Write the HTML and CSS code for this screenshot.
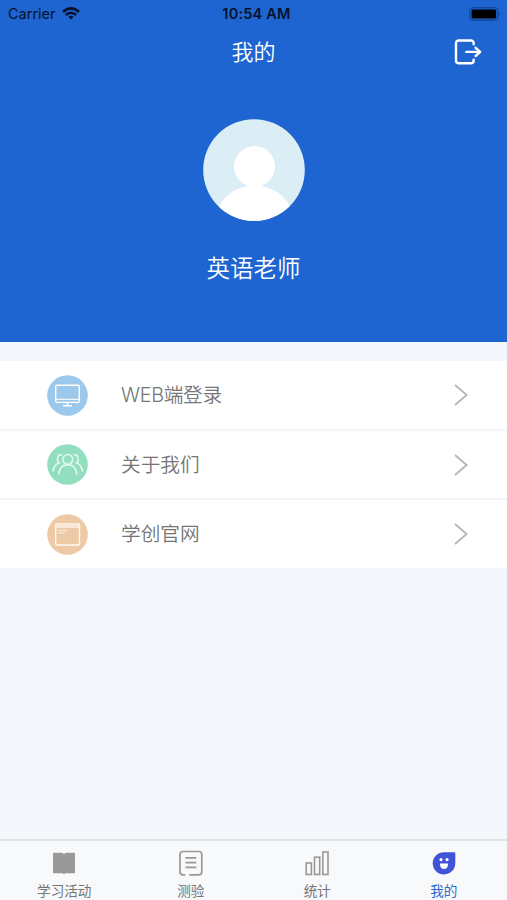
FILE: index.html
```html
<!DOCTYPE html>
<html lang="zh-CN">
<head>
    <meta charset="UTF-8">
    <meta name="viewport" content="width=device-width, initial-scale=1.0">
    <title>我的</title>
    <link rel="stylesheet" href="styles.css">
</head>
<body>
    <header class="profile">
        <div class="status-bar">
            <div class="carrier">
                <span>Carrier</span>
                <svg width="18" height="13" viewBox="0 0 18 13" fill="none" stroke="#06122b" stroke-width="2.5">
                    <path d="M1 5 Q9 -2.2 17 5"/>
                    <path d="M3.8 8 Q9 3.4 14.2 8"/>
                    <path d="M6.3 9.8 Q9 7.6 11.7 9.8 L9 12.5 Z" fill="#06122b" stroke="none"/>
                </svg>
            </div>
            <span class="time">10:54 AM</span>
            <svg class="battery" width="33" height="14" viewBox="0 0 33 14">
                <rect x="0.8" y="0.8" width="28" height="12.4" rx="3" fill="none" stroke="#0d3c86"/>
                <rect x="2.5" y="2.5" width="24.6" height="9" rx="1.5" fill="#000"/>
                <path d="M30.3 5 Q32 7 30.3 9 Z" fill="#0d3c86"/>
            </svg>
        </div>
        <div class="nav-bar">
            <h1 class="title">我的</h1>
            <svg class="logout" width="28" height="26" viewBox="0 0 28 26" fill="none" stroke="#fff" stroke-width="2.4" stroke-linecap="round" stroke-linejoin="round">
                <path d="M19.7 5.2 V4.6 Q19.7 1.5 16.6 1.5 H5 Q2 1.5 2 4.6 V21.2 Q2 24.3 5 24.3 H16.6 Q19.7 24.3 19.7 21.2 V20.6"/>
                <path d="M12.3 12.9 H26 M21.6 8.8 L26.2 12.9 L21.6 17"/>
            </svg>
        </div>
        <svg class="avatar" width="102" height="102" viewBox="0 0 102 102">
            <clipPath id="round"><circle cx="51" cy="51" r="50.8"/></clipPath>
            <g clip-path="url(#round)">
                <rect width="102" height="102" fill="#dbeef5"/>
                <ellipse cx="51.5" cy="102" rx="39" ry="35.5" fill="#fff"/>
                <circle cx="51.5" cy="47.5" r="20.5" fill="#fff"/>
            </g>
        </svg>
        <div class="name">英语老师</div>
    </header>

    <main class="menu">
        <div class="menu-item">
            <svg class="icon" width="41" height="41" viewBox="0 0 41 41" fill="none" stroke="#fff">
                <circle cx="20.5" cy="20.5" r="20.3" fill="#9bc8eb" stroke="none"/>
                <rect x="8.7" y="10.2" width="23.6" height="17.2" rx="1.3" stroke-width="1.4"/>
                <path d="M9 24.3 H32" stroke-width="1.1"/>
                <path d="M20.5 27.5 V30.5 M16 30.7 H25" stroke-width="1.4"/>
            </svg>
            <span class="label web">WEB端登录</span>
            <svg class="arrow" width="14" height="22" viewBox="0 0 14 22"><path d="M1 1 L12.7 11 L1 21"/></svg>
        </div>
        <div class="menu-item">
            <svg class="icon" width="41" height="41" viewBox="0 0 41 41" fill="none" stroke="#e5faf0" stroke-width="1.5" stroke-linecap="round">
                <circle cx="20.5" cy="20.5" r="20.3" fill="#92dfc0" stroke="none"/>
                <circle cx="20.8" cy="15.4" r="4.9"/>
                <path d="M11.8 30 Q12.8 20.7 20.8 20.7 Q28.8 20.7 29.8 30"/>
                <path d="M14.5 10.8 Q10.4 10.6 10.7 14.5 Q9.8 17.3 12.2 18.8 Q7.5 20.3 6 27"/>
                <path d="M27.1 10.8 Q31.2 10.6 30.9 14.5 Q31.8 17.3 29.4 18.8 Q34.1 20.3 35.6 27"/>
            </svg>
            <span class="label">关于我们</span>
            <svg class="arrow" width="14" height="22" viewBox="0 0 14 22"><path d="M1 1 L12.7 11 L1 21"/></svg>
        </div>
        <div class="menu-item">
            <svg class="icon" width="41" height="41" viewBox="0 0 41 41" fill="none" stroke="#fff8ef">
                <circle cx="20.5" cy="20.5" r="20.3" fill="#edc9a5" stroke="none"/>
                <rect x="8.7" y="10" width="23.8" height="21" rx="1" stroke-width="1.4"/>
                <rect x="9" y="10.2" width="23" height="3.8" fill="#f9e8d7" stroke="none"/>
                <path d="M11 16.5 H20 M11 19 H17.5" stroke="#f8e4d0" stroke-width="1.3"/>
            </svg>
            <span class="label">学创官网</span>
            <svg class="arrow" width="14" height="22" viewBox="0 0 14 22"><path d="M1 1 L12.7 11 L1 21"/></svg>
        </div>
    </main>

    <nav class="tab-bar">
        <div class="tab">
            <svg width="26" height="26" viewBox="0 0 26 26">
                <path d="M2 4 Q2 2.8 3.2 2.8 H10 Q12.2 2.8 13 4.2 Q13.8 2.8 16 2.8 H22.8 Q24 2.8 24 4 V23.2 H15.3 Q13.8 23.2 13 24.2 Q12.2 23.2 10.7 23.2 H2 Z" fill="#999"/>
            </svg>
            <span>学习活动</span>
        </div>
        <div class="tab">
            <svg width="26" height="26" viewBox="0 0 26 26" fill="none" stroke="#999" stroke-width="1.7">
                <path d="M7.3 24.8 H5 Q2 24.8 2 21.8 V4.5 Q2 1.5 5 1.5 H20.8 Q23.8 1.5 23.8 4.5 V21.8 Q23.8 24.8 20.8 24.8 H11.3"/>
                <path d="M7.5 7.8 H18.3 M7.5 12.6 H18.3 M7.5 17.4 H18.3"/>
            </svg>
            <span>测验</span>
        </div>
        <div class="tab">
            <svg width="26" height="26" viewBox="0 0 26 26" fill="none" stroke="#999" stroke-width="1.6">
                <rect x="2.2" y="13" width="5.2" height="11.5"/>
                <rect x="10.5" y="7.2" width="5.2" height="17.3"/>
                <rect x="18.8" y="2" width="5.2" height="22.5"/>
            </svg>
            <span>统计</span>
        </div>
        <div class="tab active">
            <svg width="26" height="26" viewBox="0 0 26 26">
                <path d="M13 2.2 H23 Q24.3 2.2 24.3 3.5 V13.2 A11.3 11.1 0 1 1 13 2.2 Z" fill="#4254d6"/>
                <circle cx="10" cy="9.6" r="1.6" fill="#fff"/>
                <circle cx="16" cy="9.6" r="1.6" fill="#fff"/>
                <path d="M9 13.5 H17 V14.5 Q16.5 19 13 19 Q9.5 19 9 14.5 Z" fill="#fff"/>
            </svg>
            <span>我的</span>
        </div>
    </nav>
</body>
</html>
```

FILE: styles.css
```css
* {
    box-sizing: border-box;
}
body {
    margin: 0;
    height: 900px;
    display: flex;
    flex-direction: column;
    background-color: #f3f7fb;
    font-family: Inter, "Noto Sans CJK SC", sans-serif;
    overflow: hidden;
}
svg {
    display: block;
    flex-shrink: 0;
}
.profile {
    height: 342px;
    display: flex;
    flex-direction: column;
    align-items: center;
    background-color: #1e65d1;
    color: #fff;
}
.status-bar {
    width: 100%;
    height: 27px;
    padding: 0 5px 0 8px;
    display: grid;
    grid-template-columns: 1fr auto 1fr;
    align-items: center;
    color: #06122b;
    font-size: 14.5px;
}
.carrier {
    display: flex;
    align-items: center;
    gap: 6px;
}
.time {
    padding-left: 3px;
    font-weight: 600;
    letter-spacing: 0.2px;
}
.battery {
    justify-self: end;
}
.nav-bar {
    width: 100%;
    height: 50px;
    padding: 0 25px;
    display: grid;
    grid-template-columns: 1fr auto 1fr;
    align-items: center;
}
.title {
    grid-column: 2;
    margin: 0;
    font-size: 22px;
    font-weight: 350;
    line-height: 30px;
}
.logout {
    justify-self: end;
}
.avatar {
    margin-top: 42px;
}
.name {
    margin-top: 31px;
    font-size: 23.5px;
    font-weight: 350;
    line-height: 34px;
}
.menu {
    margin-top: 19px;
}
.menu-item {
    height: 69px;
    padding: 0 39px 0 47px;
    display: flex;
    align-items: center;
    background-color: #fff;
    border-bottom: 2px solid #f3f5f8;
}
.menu-item:first-child {
    height: 70px;
}
.menu-item:last-child {
    height: 68px;
    border-bottom: none;
}
.label {
    flex: 1;
    margin-left: 33px;
    color: #757575;
    font-size: 19.7px;
    font-weight: 350;
    line-height: 28px;
}
.label.web {
    letter-spacing: -0.3px;
}
.arrow {
    fill: none;
    stroke: #b5b5b5;
    stroke-width: 1.8;
}
.tab-bar {
    height: 61px;
    margin-top: auto;
    padding: 9px 0 0 1px;
    display: flex;
    border-top: 2px solid #dfe3e6;
    background-color: #f7f9fb;
}
.tab {
    flex: 1;
    display: flex;
    flex-direction: column;
    align-items: center;
    gap: 6px;
    color: #757575;
    font-size: 13.6px;
    line-height: 18px;
}
.tab.active {
    color: #2c6bcb;
}
```
